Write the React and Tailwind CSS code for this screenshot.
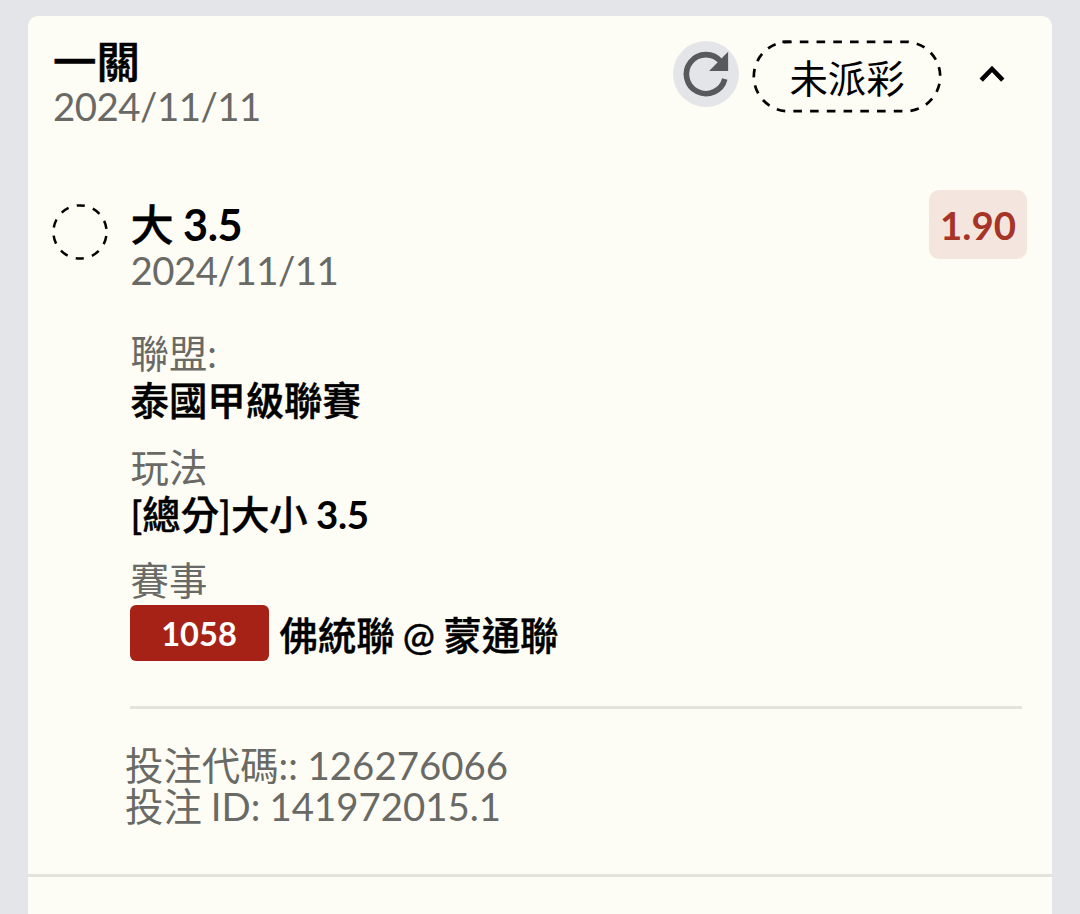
const bet = {
  title: '一關',
  date: '2024/11/11',
  status: '未派彩',
  pick: '大',
  line: '3.5',
  pickDate: '2024/11/11',
  odds: '1.90',
  leagueLabel: '聯盟:',
  league: '泰國甲級聯賽',
  marketLabel: '玩法',
  market: '[總分]大小',
  matchLabel: '賽事',
  matchNo: '1058',
  match: '佛統聯 @ 蒙通聯',
  code: '投注代碼:: 126276066',
  id: '投注 ID: 141972015.1',
}

const RefreshIcon = () => (
  <svg className="w-[66px] h-[66px]" viewBox="0 0 66 66" fill="none">
    <circle cx="33" cy="33" r="33" fill="#e4e5e8" />
    <path d="M48 20.8A19.5 19.5 0 1 0 51.8 38" stroke="#58595b" strokeWidth="5.6" />
    <path d="M55.1 10.7V29.9H36.1Z" fill="#58595b" />
  </svg>
)

const StatusPill = ({ children }) => (
  <div className="relative w-[190px] h-[73px] flex items-center justify-center">
    <svg className="absolute inset-0" width="190" height="73" viewBox="0 0 190 73" fill="none">
      <path
        d="M36.5 1.8H153.5A34.7 34.7 0 0 1 153.5 71.2H36.5A34.7 34.7 0 0 1 36.5 1.8Z"
        stroke="#000"
        strokeWidth="2.7"
        strokeDasharray="8.6 8.14"
        strokeDashoffset="-11.3"
      />
      <path d="M36.5 1.8H30.4" stroke="#000" strokeWidth="2.7" />
      <path d="M36.5 1.8H38.5" stroke="#000" strokeWidth="2.7" />
    </svg>
    <span className="relative top-[1px] leading-[42px] text-black">{children}</span>
  </div>
)

const DateText = ({ children }) => (
  <p className="leading-[42px] tracking-[-0.5px]">{children}</p>
)

const Field = ({ label, children }) => (
  <div className="h-[113.6px]">
    <p className="leading-[47px]">{label}</p>
    {children}
  </div>
)

const App = () => {
  return (
    <div className="h-[914px] overflow-hidden bg-[#e4e5e8] pt-[15.5px] pl-[27.5px] pr-[28px] font-['Lato','Noto_Sans_CJK_TC',sans-serif] text-[38.4px] text-[#696965] whitespace-nowrap [word-spacing:-1.5px]">
      <div className="h-[920px] rounded-t-[10px] bg-[#fefdf5]">
        <header className="flex justify-between h-[173px] pt-[22.5px] pl-[25.5px]">
          <div>
            <h1 className="text-[43.4px] leading-[46px] pb-[1px] font-medium text-black [-webkit-text-stroke:0.6px]">{bet.title}</h1>
            <DateText>{bet.date}</DateText>
          </div>
          <div className="flex items-start pt-[2px]">
            <div className="pt-[1px]">
              <RefreshIcon />
            </div>
            <div className="ml-[13.5px] mr-[37px]">
              <StatusPill>{bet.status}</StatusPill>
            </div>
            <svg className="w-[26px] h-[18px] mt-[25px] mr-[47px]" viewBox="0 0 26 18" fill="none">
              <path d="M2.2 15.2L13 4L23.8 15.2" stroke="#000" strokeWidth="4.6" />
            </svg>
          </div>
        </header>

        <section className="flex h-[685px] pl-[24px]">
          <svg className="w-[58px] h-[58px] mt-[14.5px] shrink-0" viewBox="0 0 58 58" fill="none">
            <circle cx="28" cy="29" r="26.6" stroke="#000" strokeWidth="2.5" strokeDasharray="8.3 8.41" strokeDashoffset="-4.2" />
          </svg>
          <div className="flex-1 ml-[21px]">
            <div className="flex justify-between h-[141.5px] pt-[1.5px] pr-[25px]">
              <div className="pt-[10px]">
                <h2 className="text-[43.2px] leading-[49px] font-medium text-black">
                  <span className="[-webkit-text-stroke:0.4px]">{bet.pick}</span>{' '}
                  <span className="font-bold tracking-[-0.5px]">{bet.line}</span>
                </h2>
                <DateText>{bet.pickDate}</DateText>
              </div>
              <div className="flex items-center justify-center w-[98px] h-[69px] rounded-[10px] bg-[#f4e6df] text-[#a63427] font-bold leading-[48px]">
                {bet.odds}
              </div>
            </div>

            <Field label={bet.leagueLabel}>
              <p className="leading-[47px] font-medium text-black [-webkit-text-stroke:0.5px]">{bet.league}</p>
            </Field>
            <Field label={bet.marketLabel}>
              <p className="leading-[47px] font-medium text-black">
                <span className="[-webkit-text-stroke:0.4px]">{bet.market}</span>{' '}
                <span className="font-bold tracking-[-0.3px]">{bet.line}</span>
              </p>
            </Field>
            <Field label={bet.matchLabel}>
              <div className="flex items-center mt-[1px]">
                <span className="w-[139px] h-[56px] -ml-[1px] rounded-[6px] bg-[#a62217] text-center text-[32.6px] leading-[57px] font-bold text-white">
                  {bet.matchNo}
                </span>
                <span className="ml-[11px] pt-[4px] leading-[47px] font-medium text-black [-webkit-text-stroke:0.4px]">{bet.match}</span>
              </div>
            </Field>

            <div className="mt-[35px] mr-[30px] -ml-[1px] h-[3px] bg-[#e3e3db]" />
            <div className="-ml-[5.5px] mt-[36px] leading-[41.5px]">
              <p className="[word-spacing:0px]">{bet.code}</p>
              <p className="[word-spacing:-0.8px]">{bet.id}</p>
            </div>
          </div>
        </section>

        <div className="h-[3px] bg-[#e3e3db]" />
      </div>
    </div>
  )
}

export default App
